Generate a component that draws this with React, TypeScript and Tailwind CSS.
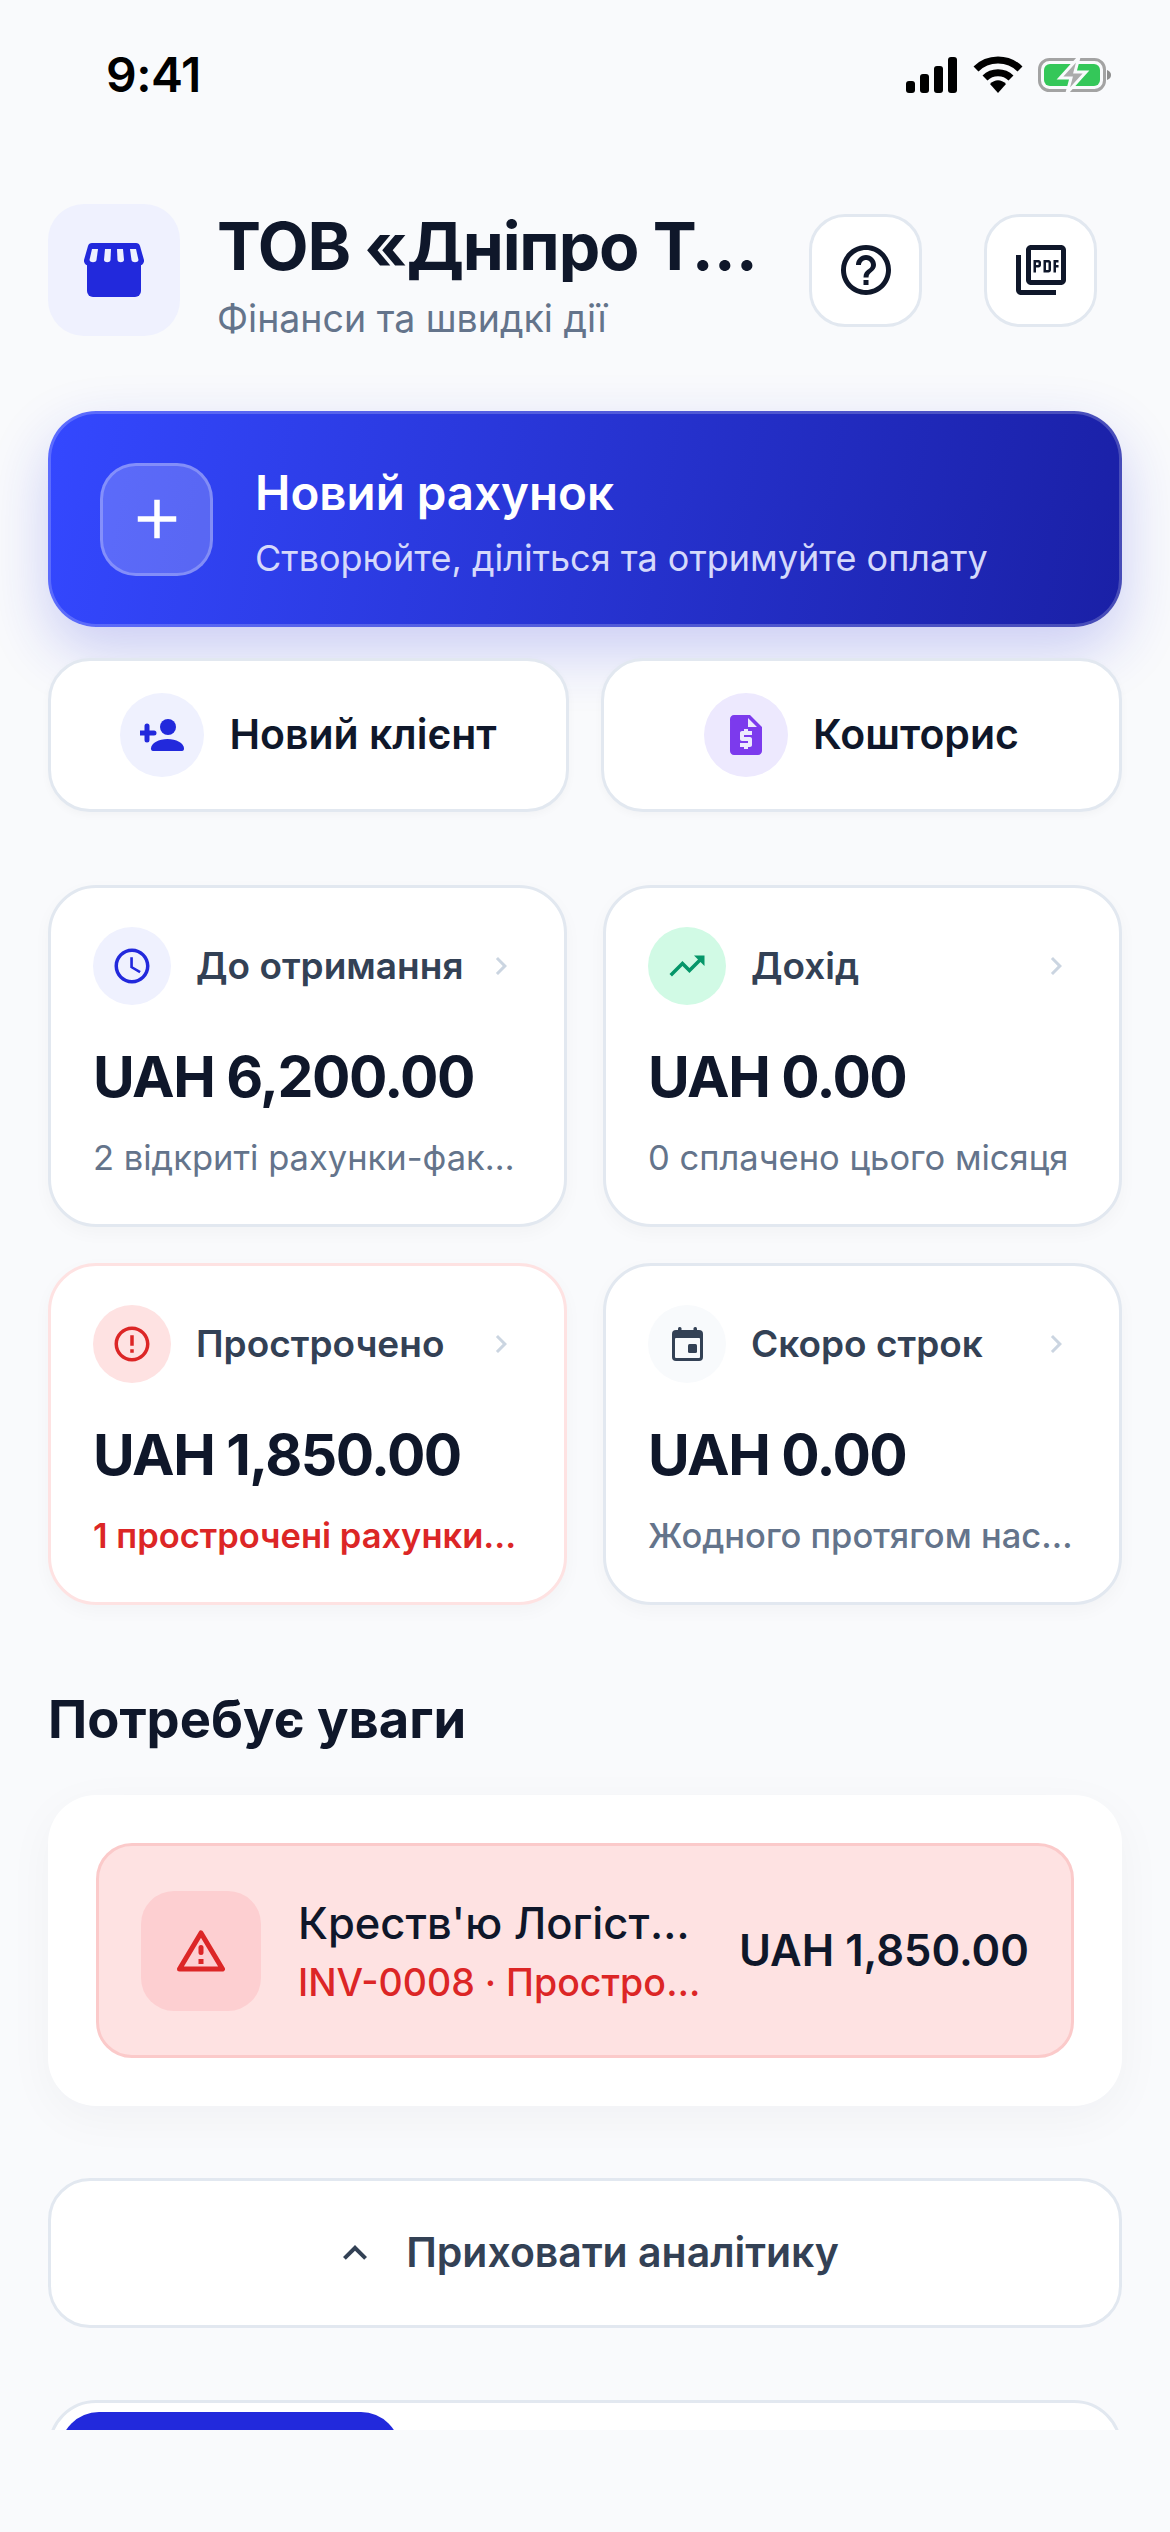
import type { ReactNode } from 'react';
import {
  MdAdd,
  MdChevronRight,
  MdErrorOutline,
  MdExpandLess,
  MdHelpOutline,
  MdOutlinePictureAsPdf,
  MdOutlineSchedule,
  MdRequestQuote,
  MdTrendingUp,
} from 'react-icons/md';

function StatusIcons() {
  return (
    <div className="flex items-center gap-[15px]">
      <svg width="52" height="36" viewBox="0 0 52 36" fill="#000">
        <rect x="0" y="24" width="9" height="12" rx="3" />
        <rect x="14" y="17" width="9" height="19" rx="3" />
        <rect x="28" y="9" width="9" height="27" rx="3" />
        <rect x="42" y="0" width="9" height="36" rx="3" />
      </svg>
      <svg width="50" height="38" viewBox="0 0 50 38" fill="none" stroke="#000" strokeWidth="7">
        <path d="M3 13 C15 1 35 1 47 13" />
        <path d="M12 22 C19 15 31 15 38 22" />
        <path d="M17 28 L25 37 L33 28 C28 23 22 23 17 28 Z" fill="#000" stroke="none" />
      </svg>
      <svg width="74" height="38" viewBox="0 0 74 38" fill="none">
        <rect x="1.5" y="3.5" width="65" height="31" rx="10" stroke="#a3a3a3" strokeWidth="3" />
        <rect x="6" y="8" width="56" height="22" rx="6" fill="#34c759" />
        <path d="M69 14 C72 15 73 17 73 19 C73 21 72 23 69 24 Z" fill="#8e8e8e" />
        <path d="M41 1 L22 22 L33 22 L29 37 L48 16 L37 16 Z" fill="#ababab" stroke="#f9fafc" strokeWidth="3" />
      </svg>
    </div>
  );
}

function StoreIcon() {
  return (
    <svg width="60" height="54" viewBox="0 0 60 54">
      <rect x="3" y="16" width="54" height="38" rx="6" fill="#2229dc" />
      <path d="M8 0 H52 C54 0 55.5 1 56 3 L60 17 C60.5 20 58 23 54 23 H6 C2 23 -0.5 20 0 17 L4 3 C4.5 1 6 0 8 0 Z" fill="#2229dc" />
      <g fill="#eff1fe">
        <path d="M8 6 H14 L12.5 17 C12 20 6 20 5.5 17 Z" />
        <path d="M21 6 H27 L26.5 17 C26 20 20.5 20 20 17 Z" />
        <path d="M33 6 H39 L40 17 C39.5 20 34 20 33.5 17 Z" />
        <path d="M46 6 H52 L54.5 17 C54 20 48 20 47.5 17 Z" />
      </g>
    </svg>
  );
}

function PersonPlusIcon() {
  return (
    <svg width="44" height="32" viewBox="0 0 44 32" fill="#2229dc">
      <circle cx="28" cy="8" r="8" />
      <path d="M13 32 H42 C43.5 32 44 31 44 29.5 C44 24 36 20 27.5 20 C19 20 11 24 11 29.5 C11 31 11.5 32 13 32 Z" />
      <path d="M0 14 H14 M7 7 V21" stroke="#2229dc" strokeWidth="5" strokeLinecap="round" />
    </svg>
  );
}

function CalendarIcon() {
  return (
    <svg width="31" height="34" viewBox="0 0 31 34">
      <rect x="0" y="3" width="31" height="31" rx="4" fill="#334155" />
      <rect x="6" y="0" width="3.5" height="6" rx="1.5" fill="#334155" />
      <rect x="21.5" y="0" width="3.5" height="6" rx="1.5" fill="#334155" />
      <rect x="3" y="11" width="25" height="20" rx="1" fill="#f8fafc" />
      <rect x="16" y="17" width="9" height="9" rx="1.5" fill="#334155" />
    </svg>
  );
}

function WarningIcon() {
  return (
    <svg width="48" height="42" viewBox="0 0 48 42" fill="none">
      <path d="M24 3 L45.5 39 H2.5 Z" stroke="#dc2626" strokeWidth="5" strokeLinejoin="round" />
      <rect x="21.5" y="15" width="5" height="10" rx="2.5" fill="#dc2626" />
      <rect x="21.5" y="29" width="5" height="5" fill="#dc2626" />
    </svg>
  );
}

function QuickAction({ icon, label, circle }: { icon: ReactNode; label: string; circle: string }) {
  return (
    <div className="h-[154px] rounded-[42px] border-[3px] border-[#e2e8f0] bg-white shadow-[0_3px_9px_rgba(15,23,42,0.03)] flex items-center justify-center gap-[25px]">
      <div className={`w-[84px] h-[84px] rounded-full flex items-center justify-center ${circle}`}>{icon}</div>
      <span className="text-[41px] font-semibold text-[#0f172a]">{label}</span>
    </div>
  );
}

function MetricCard({
  icon,
  circle,
  label,
  amount,
  note,
  noteClass = 'text-[#64748b]',
  borderClass = 'border-[#e2e8f0]',
}: {
  icon: ReactNode;
  circle: string;
  label: string;
  amount: string;
  note: string;
  noteClass?: string;
  borderClass?: string;
}) {
  return (
    <div className={`h-[342px] rounded-[48px] border-[3px] bg-white px-[42px] pt-[39px] shadow-[0_6px_18px_rgba(15,23,42,0.03)] ${borderClass}`}>
      <div className="flex items-center">
        <div className={`w-[78px] h-[78px] rounded-full flex items-center justify-center shrink-0 ${circle}`}>{icon}</div>
        <span className="ml-[25px] flex-1 truncate text-[37px] font-semibold text-[#334155]">{label}</span>
        <MdChevronRight size={36} className="text-[#cbd5e1] mr-[3px]" />
      </div>
      <div className="mt-[36px] text-[57px] leading-[72px] font-bold tracking-[-1.5px] text-[#0f172a] whitespace-nowrap">{amount}</div>
      <div className={`mt-[24px] truncate text-[34.5px] leading-[42px] ${noteClass}`}>{note}</div>
    </div>
  );
}

export default function App() {
  return (
    <div className="w-[1170px] h-[2532px] bg-[#f9fafc] overflow-hidden font-['Inter',sans-serif]">
      <div className="h-[150px] flex items-center justify-between pl-[106px] pr-[58px]">
        <span className="text-[48px] font-semibold text-black tracking-[-0.5px]">9:41</span>
        <StatusIcons />
      </div>

      <main className="h-[2280px] overflow-hidden px-[48px] pt-[54px]">
        <header className="flex items-center pr-[25px]">
          <div className="w-[132px] h-[132px] rounded-[36px] bg-[#eff1fe] flex items-center justify-center shrink-0">
            <StoreIcon />
          </div>
          <div className="ml-[37px] mr-[36px] flex-1 min-w-0 h-[132px] pt-[6px]">
            <div className="truncate text-[66px] leading-[72px] font-bold tracking-[-1.2px] text-[#0f172a]">ТОВ «Дніпро Трейд»</div>
            <div className="mt-[16px] truncate text-[37.5px] leading-[42px] text-[#64748b]">Фінанси та швидкі дії</div>
          </div>
          <div className="flex gap-[62px]">
            <button className="w-[113px] h-[113px] rounded-[36px] border-[3px] border-[#e2e8f0] bg-white flex items-center justify-center">
              <MdHelpOutline size={60} className="text-[#0f172a]" />
            </button>
            <button className="w-[113px] h-[113px] rounded-[36px] border-[3px] border-[#e2e8f0] bg-white flex items-center justify-center">
              <MdOutlinePictureAsPdf size={60} className="text-[#0f172a]" />
            </button>
          </div>
        </header>

        <div className="mt-[75px] h-[216px] rounded-[48px] border-[3px] border-[rgba(255,255,255,0.2)] bg-[linear-gradient(100deg,#3448ff,#1a20a6)] bg-origin-border shadow-[0_24px_60px_rgba(36,44,220,0.22)] flex items-center pl-[49px]">
          <div className="w-[113px] h-[113px] rounded-[36px] border-[3px] border-[rgba(255,255,255,0.25)] bg-[rgba(255,255,255,0.2)] flex items-center justify-center">
            <MdAdd size={66} className="text-white" />
          </div>
          <div className="ml-[42px] mt-[6px]">
            <div className="text-[47.5px] leading-[60px] font-semibold text-white">Новий рахунок</div>
            <div className="mt-[12px] text-[36px] leading-[46px] text-[#d5d9fb]">Створюйте, діліться та отримуйте оплату</div>
          </div>
        </div>

        <div className="mt-[31px] grid grid-cols-2 gap-[32px]">
          <QuickAction icon={<PersonPlusIcon />} label="Новий клієнт" circle="bg-[#eff1fe]" />
          <QuickAction
            icon={<MdRequestQuote size={48} className="text-[#7c3aed]" />}
            label="Кошторис"
            circle="bg-[#ede9fe]"
          />
        </div>

        <div className="mt-[73px] grid grid-cols-2 gap-x-[36px] gap-y-[36px]">
          <MetricCard
            icon={<MdOutlineSchedule size={42} className="text-[#2229dc]" />}
            circle="bg-[#eff1fe]"
            label="До отримання"
            amount="UAH 6,200.00"
            note="2 відкриті рахунки-фактури"
          />
          <MetricCard
            icon={<MdTrendingUp size={42} className="text-[#059669]" />}
            circle="bg-[#d1fae5]"
            label="Дохід"
            amount="UAH 0.00"
            note="0 сплачено цього місяця"
          />
          <MetricCard
            icon={<MdErrorOutline size={42} className="text-[#dc2626]" />}
            circle="bg-[#fee2e2]"
            label="Прострочено"
            amount="UAH 1,850.00"
            note="1 прострочені рахунки-фактури"
            noteClass="text-[#dc2626] font-semibold"
            borderClass="border-[#fee2e2]"
          />
          <MetricCard
            icon={<CalendarIcon />}
            circle="bg-[#f8fafc]"
            label="Скоро строк"
            amount="UAH 0.00"
            note="Жодного протягом наступних 7 днів"
            noteClass="text-[#64748b] font-medium"
          />
        </div>

        <h2 className="mt-[81px] text-[52.5px] leading-[66px] font-bold text-[#0f172a]">Потребує уваги</h2>

        <section className="mt-[43px] rounded-[48px] bg-white p-[48px] shadow-[0_12px_48px_rgba(15,23,42,0.04)]">
          <div className="h-[215px] rounded-[36px] border-[3px] border-[#fbcaca] bg-[#fee2e2] flex items-center pl-[42px] pr-[42px]">
            <div className="w-[120px] h-[120px] rounded-[33px] bg-[#fdcfd1] flex items-center justify-center shrink-0">
              <WarningIcon />
            </div>
            <div className="ml-[37px] w-[406px] min-w-0">
              <div className="truncate text-[43.5px] leading-[54px] font-medium text-[#0f172a]">Креств'ю Логістика</div>
              <div className="mt-[10px] truncate text-[37.5px] leading-[46px] font-medium text-[#dc2626]">INV-0008 · Прострочено</div>
            </div>
            <div className="ml-auto text-[43.5px] font-semibold text-[#0f172a] whitespace-nowrap">UAH 1,850.00</div>
          </div>
        </section>

        <button className="mt-[72px] w-full h-[150px] rounded-[42px] border-[3px] border-[#e2e8f0] bg-white flex items-center justify-center gap-[27px]">
          <MdExpandLess size={48} className="text-[#334155]" />
          <span className="text-[41px] font-semibold text-[#334155]">Приховати аналітику</span>
        </button>

        <div className="mt-[72px] h-[200px] rounded-[48px] border-[3px] border-[#e2e8f0] bg-white p-[9px]">
          <div className="w-[340px] h-[120px] rounded-[39px] bg-[#2229dc]" />
        </div>
      </main>
    </div>
  );
}
